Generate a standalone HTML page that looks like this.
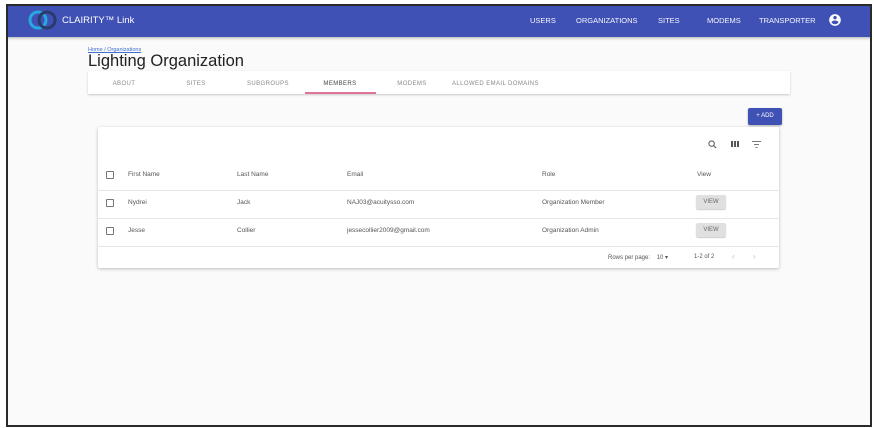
<!DOCTYPE html>
<html><head><style>
*{box-sizing:border-box;margin:0;padding:0}
body{width:874px;height:428px;background:#fff;font-family:"Liberation Sans",sans-serif;position:relative;overflow:hidden}
.frame{position:absolute;left:6px;top:4px;width:866px;height:423px;background:#fafafa;overflow:hidden}
.bord{position:absolute;left:6px;top:4px;width:866px;height:423px;border:2.5px solid #2a2a2a;z-index:10}
.hdr{position:absolute;left:0;top:0;right:0;height:33px;background:#3f51b5;box-shadow:0 1px 3px rgba(0,0,0,.3)}
.hdr .t{position:absolute;left:56px;top:11px;color:#fff;font-size:9.5px}
.nav{position:absolute;top:12px;color:#fff;font-size:7.5px;opacity:.95}
.abs{position:absolute}
.tabs{position:absolute;left:82px;top:67px;width:702px;height:23px;background:#fff;box-shadow:0 1px 2px rgba(0,0,0,.2)}
.tab{position:absolute;top:9.5px;font-size:6px;color:#888;letter-spacing:.4px;width:72px;text-align:center}
.card{position:absolute;left:92px;top:123px;width:681px;height:141px;background:#fff;box-shadow:0 1px 3px rgba(0,0,0,.25);border-radius:2px}
.row{position:absolute;left:0;right:0;height:28px;border-bottom:1px solid #e6e6e6;font-size:6.5px;color:#555}
.row span{position:absolute;top:8px}
.cb{position:absolute;left:8px;top:7.5px;width:8px;height:8px;border:1.2px solid #777;border-radius:1px}
.vb{position:absolute;left:598px;top:4px;width:30px;height:14px;background:#e0e0e0;border-radius:2px;font-size:6px;text-align:center;line-height:14px;color:#666;box-shadow:0 1px 1px rgba(0,0,0,.2)}
</style></head><body>
<div class="bord"></div>
<div class="frame">
<div class="hdr">
<svg class="abs" style="left:22px;top:5px" width="30" height="22" viewBox="0 0 30 22"><circle cx="10" cy="11" r="8" fill="none" stroke="#29a8e0" stroke-width="3"/><circle cx="19" cy="11" r="8" fill="none" stroke="#2a3a6a" stroke-width="3"/></svg>
<div class="t">CLAIRITY™ Link</div>
<div class="nav" style="left:524px">USERS</div>
<div class="nav" style="left:570px">ORGANIZATIONS</div>
<div class="nav" style="left:652px">SITES</div>
<div class="nav" style="left:701px">MODEMS</div>
<div class="nav" style="left:753px">TRANSPORTER</div>
<svg class="abs" style="left:822px;top:9px" width="14" height="14" viewBox="0 0 24 24"><path fill="#fff" d="M12 2C6.5 2 2 6.5 2 12s4.5 10 10 10 10-4.5 10-10S17.5 2 12 2zm0 3c1.7 0 3 1.3 3 3s-1.3 3-3 3-3-1.3-3-3 1.3-3 3-3zm0 14.2c-2.5 0-4.7-1.3-6-3.2 0-2 4-3.1 6-3.1s6 1.1 6 3.1c-1.3 1.9-3.5 3.2-6 3.2z"/></svg>
</div>
<div class="tabs">
<div class="tab" style="left:0">ABOUT</div>
<div class="tab" style="left:72px">SITES</div>
<div class="tab" style="left:144px">SUBGROUPS</div>
<div class="tab" style="left:216px;color:#444">MEMBERS</div>
<div class="tab" style="left:288px">MODEMS</div>
<div class="tab" style="left:360px;width:120px;text-align:left;padding-left:4px">ALLOWED EMAIL DOMAINS</div>
<div class="abs" style="left:217px;top:21px;width:71px;height:2px;background:#e0739a"></div>
</div>
<div class="abs" style="left:82px;top:43px;font-size:5.5px;color:#3f6fd0;text-decoration:underline">Home / Organizations</div>
<div class="abs" style="left:82px;top:48px;font-size:16.5px;color:#222;line-height:19px">Lighting Organization</div>
<div class="abs" style="left:742px;top:104px;width:34px;height:17px;background:#3f51b5;border-radius:2px;color:#fff;font-size:6px;text-align:center;line-height:17px;box-shadow:0 1px 2px rgba(0,0,0,.3)">+ ADD</div>
<div class="card">
<svg class="abs" style="left:610px;top:13px" width="9" height="9" viewBox="0 0 10 10"><circle cx="4" cy="4" r="3" fill="none" stroke="#666" stroke-width="1.2"/><path d="M6.2 6.2L9 9" stroke="#666" stroke-width="1.3"/></svg>
<div class="abs" style="left:633px;top:14px;width:8px;height:6px;background:repeating-linear-gradient(90deg,#555 0 2px,#fff 2px 3px)"></div>
<svg class="abs" style="left:654px;top:14px" width="9" height="7" viewBox="0 0 9 7"><path d="M0 .5H9M2 3.5H7M3.5 6.5H5.5" stroke="#777" stroke-width="1"/></svg>
<div class="row" style="top:36px"><div class="cb"></div><span style="left:30px">First Name</span><span style="left:139px">Last Name</span><span style="left:249px">Email</span><span style="left:444px">Role</span><span style="left:599px">View</span></div>
<div class="row" style="top:64px"><div class="cb"></div><span style="left:30px">Nydrei</span><span style="left:139px">Jack</span><span style="left:249px">NAJ03@acuitysso.com</span><span style="left:444px">Organization Member</span><div class="vb">VIEW</div></div>
<div class="row" style="top:92px"><div class="cb"></div><span style="left:30px">Jesse</span><span style="left:139px">Collier</span><span style="left:249px">jessecollier2009@gmail.com</span><span style="left:444px">Organization Admin</span><div class="vb">VIEW</div></div>
<div class="abs" style="left:510px;top:127px;font-size:6px;color:#555">Rows per page:&nbsp;&nbsp;&nbsp; 10 ▾</div>
<div class="abs" style="left:596px;top:127px;font-size:6px;color:#555">1-2 of 2</div>
<div class="abs" style="left:634px;top:125px;font-size:8px;color:#bbb">‹</div>
<div class="abs" style="left:655px;top:125px;font-size:8px;color:#bbb">›</div>
</div>
</div>
</body></html>
